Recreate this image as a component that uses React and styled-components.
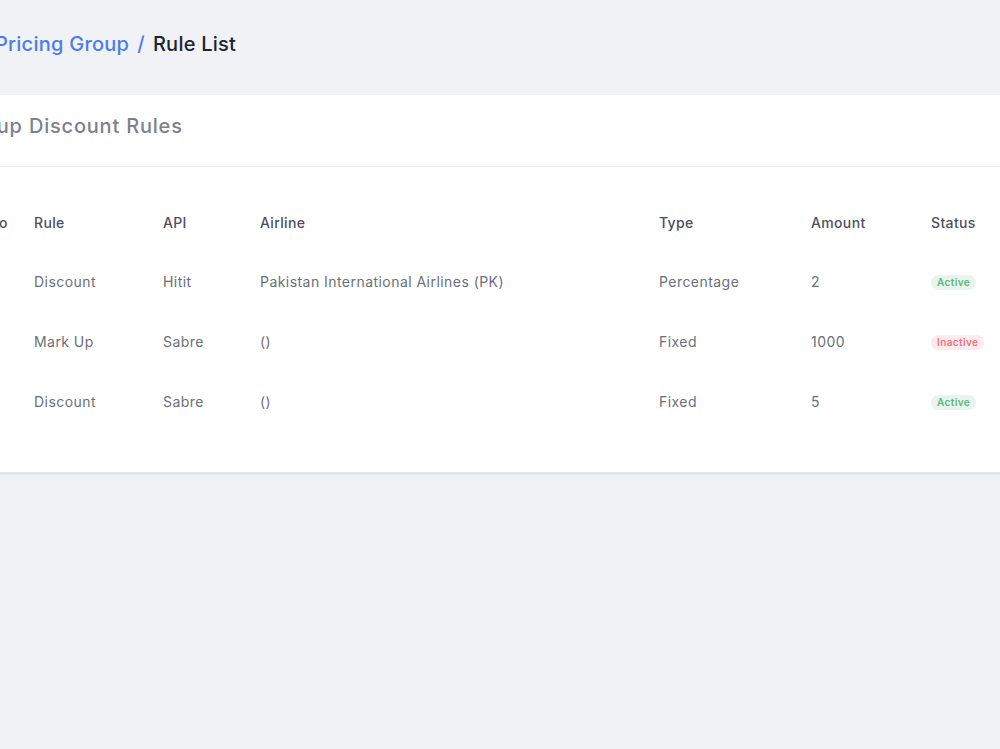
import React from 'react';
import styled, { createGlobalStyle } from 'styled-components';

const GlobalStyle = createGlobalStyle`
  html, body {
    margin: 0;
    padding: 0;
    background: #f0f2f6;
    overflow: hidden;
  }
  body {
    font-family: "Inter", "Open Sans", sans-serif;
    min-height: 749px;
  }
`;

const rules = [
  { no: 1, rule: 'Discount', api: 'Hitit', airline: 'Pakistan International Airlines (PK)', type: 'Percentage', amount: '2', active: true },
  { no: 2, rule: 'Mark Up', api: 'Sabre', airline: '()', type: 'Fixed', amount: '1000', active: false },
  { no: 3, rule: 'Discount', api: 'Sabre', airline: '()', type: 'Fixed', amount: '5', active: true },
];

const columns = [
  { label: 'No', width: 46 },
  { label: 'Rule', width: 129 },
  { label: 'API', width: 97 },
  { label: 'Airline', width: 399 },
  { label: 'Type', width: 152 },
  { label: 'Amount', width: 120 },
  { label: 'Status', width: 120 },
  { label: 'Action', width: 100 },
];

export default function App() {
  return (
    <>
      <GlobalStyle />
      <Main>
        <Breadcrumb>
          <Crumb>Pricing Group</Crumb>
          <Sep>/</Sep>
          <Current>Rule List</Current>
        </Breadcrumb>
        <Card>
          <CardHeader>
            <CardTitle>Group Discount Rules</CardTitle>
          </CardHeader>
          <CardBody>
            <Table>
              <colgroup>
                {columns.map(c => <col key={c.label} style={{ width: c.width }} />)}
              </colgroup>
              <thead>
                <tr>
                  {columns.map(c => <Th key={c.label}>{c.label}</Th>)}
                </tr>
              </thead>
              <tbody>
                {rules.map(r => (
                  <tr key={r.no}>
                    <Td>{r.no}</Td>
                    <Td>{r.rule}</Td>
                    <Td>{r.api}</Td>
                    <Td>{r.airline}</Td>
                    <Td>{r.type}</Td>
                    <Td>{r.amount}</Td>
                    <Td>
                      <Badge $active={r.active}>{r.active ? 'Active' : 'Inactive'}</Badge>
                    </Td>
                    <Td />
                  </tr>
                ))}
              </tbody>
            </Table>
          </CardBody>
        </Card>
      </Main>
    </>
  );
}

const Main = styled.main`
  margin-left: -60px;
  width: 1200px;
  padding-top: 29px;
`;

const Breadcrumb = styled.div`
  display: flex;
  align-items: center;
  gap: 8px;
  padding-left: 55px;
  height: 30px;
  font-size: 20px;
  font-weight: 500;
  letter-spacing: 0.25px;
`;

const Crumb = styled.span`
  color: #4a7cf0;
`;

const Sep = styled.span`
  color: #4a7cf0;
`;

const Current = styled.span`
  color: #1d2330;
`;

const Card = styled.section`
  margin-top: 36px;
  background: #ffffff;
  box-shadow: 0 1px 2px rgba(30, 40, 70, 0.12);
  border-bottom: 1px solid #e6e8ee;
`;

const CardHeader = styled.div`
  padding: 16px 22px 25px 20px;
  border-bottom: 1px solid #e9ebf0;
`;

const CardTitle = styled.h2`
  margin: 0;
  font-size: 20px;
  line-height: 30px;
  font-weight: 500;
  letter-spacing: 0.8px;
  color: #7c818c;
`;

const CardBody = styled.div`
  padding: 26px 48px 41px;
`;

const Table = styled.table`
  border-collapse: collapse;
  table-layout: fixed;
  width: 1163px;
`;

const Th = styled.th`
  height: 58px;
  padding: 0;
  text-align: left;
  font-size: 14px;
  font-weight: 500;
  letter-spacing: 0.35px;
  color: #4b5060;
`;

const Td = styled.td`
  height: 60px;
  padding: 0;
  font-size: 14px;
  font-weight: 400;
  letter-spacing: 0.45px;
  color: #6b6f7a;
`;

const Badge = styled.span`
  display: inline-block;
  padding: 1px 6px;
  border-radius: 8px;
  font-size: 10px;
  line-height: 13px;
  font-weight: 600;
  letter-spacing: 0.4px;
  color: ${p => (p.$active ? '#5db77a' : '#f2727d')};
  background: ${p => (p.$active ? '#e8f5ec' : '#fdebed')};
`;
